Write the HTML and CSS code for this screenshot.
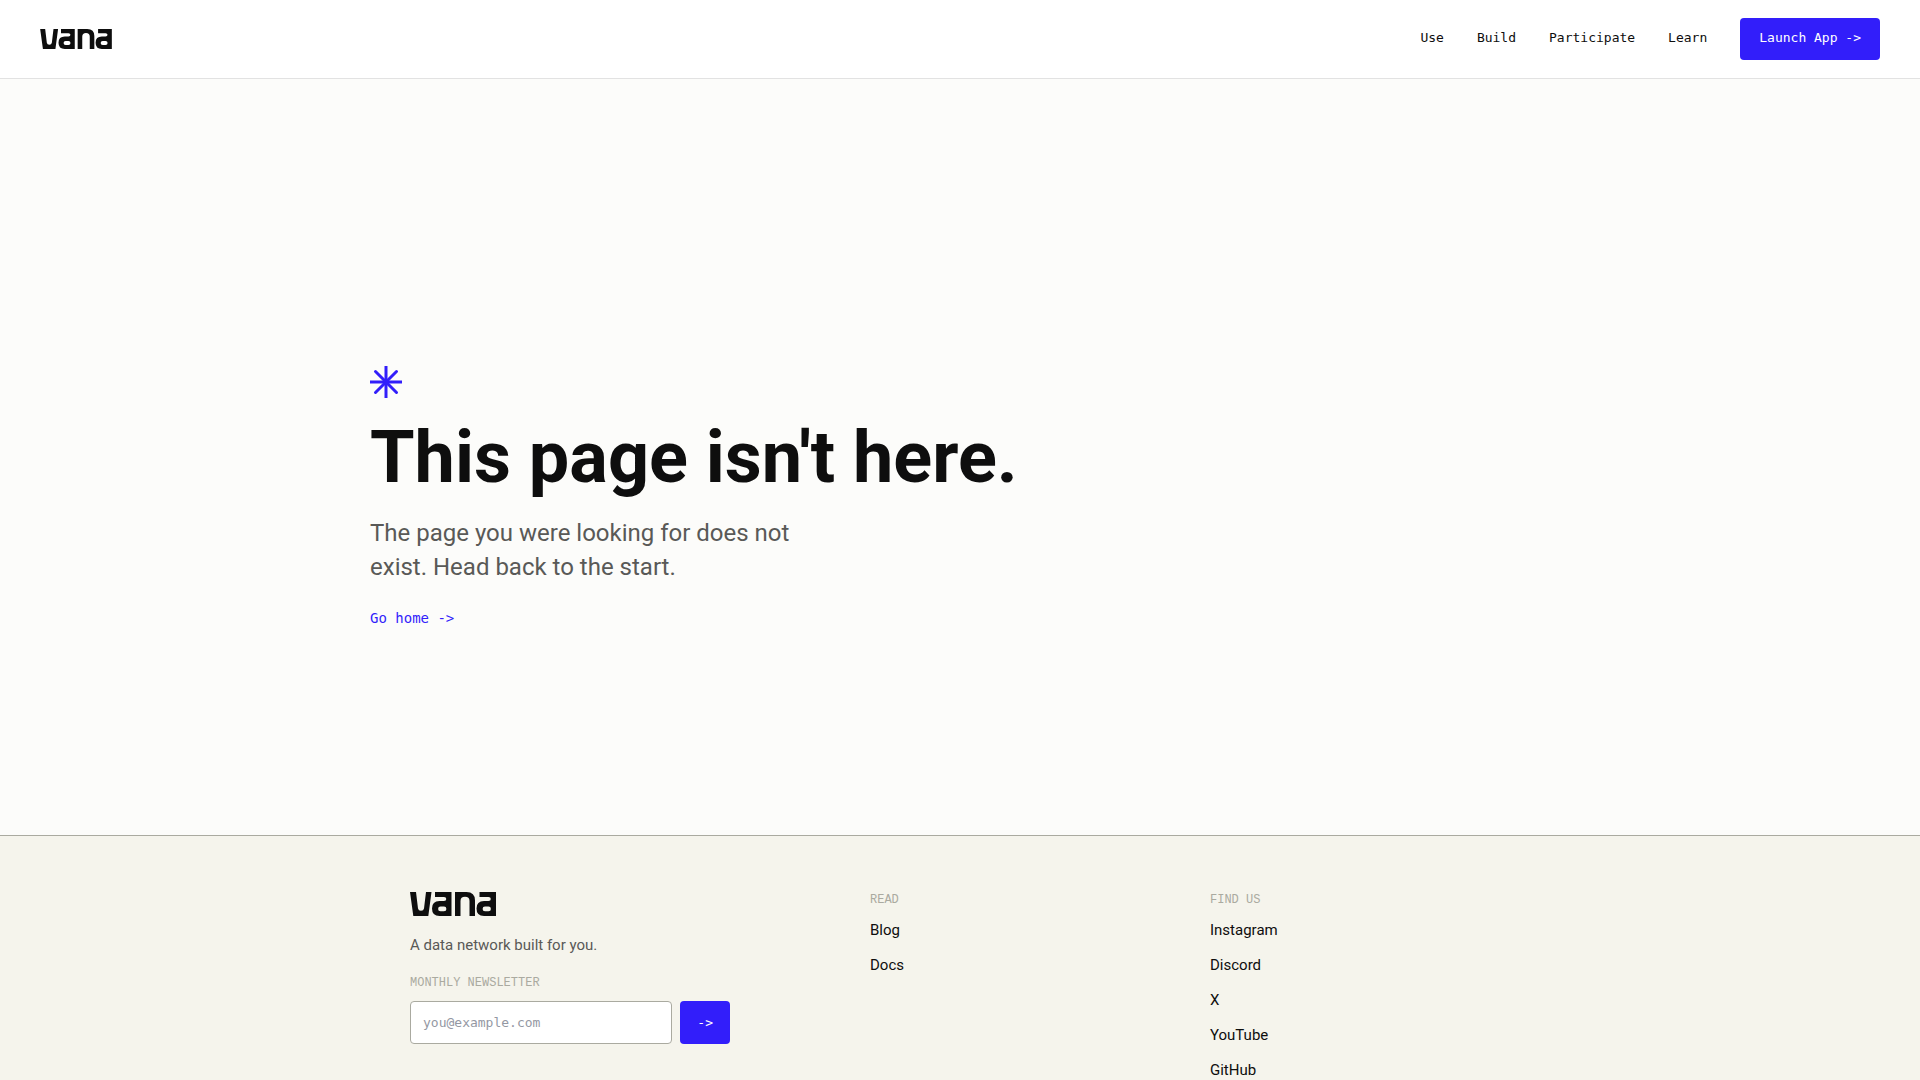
FILE: index.html
```html
<!DOCTYPE html>
<html lang="en">
<head>
  <meta charset="UTF-8">
  <meta name="viewport" content="width=device-width, initial-scale=1">
  <title>Vana</title>
  <link rel="stylesheet" href="styles.css">
</head>
<body>
  <!-- logo shapes, used in header and footer -->
  <svg class="defs" aria-hidden="true">
    <symbol id="logo" viewBox="0 0 86 24">
      <path d="M0 0H6L8 16.5Q8.400 18.800 11 18.800T14 16.500L16 0H21.500L18.300 24H3.300Z"/>
      <path id="bowl" fill-rule="evenodd" d="M25 0H41.500V24H29.500Q22 24 22 16.500T29.500 9H34Q36.300 9 36.300 7T34 5H25ZM30.500 14.500A2.400 2.400 0 0 0 30.500 19.300H34A2.400 2.400 0 0 0 34 14.500Z"/>
      <path d="M45 0H56.500Q65 0 65 8.500V24H59.500V9Q59.500 4.800 55 4.800T50.500 9V24H45Z"/>
      <use href="#bowl" x="44.500"/>
    </symbol>
  </svg>

  <header class="header">
    <a class="logo-link" href="/" aria-label="Vana"><svg class="logo"><use href="#logo"/></svg></a>
    <nav class="nav">
      <a href="/use">Use</a>
      <a href="/build">Build</a>
      <a href="/participate">Participate</a>
      <a href="/learn">Learn</a>
      <button class="btn launch" type="button">Launch App -&gt;</button>
    </nav>
  </header>

  <main class="main">
    <div class="container">
      <svg class="star" viewBox="0 0 32 32" aria-hidden="true">
        <path d="M16 0V32M0 16H32"/>
        <path stroke-linecap="round" d="M5.500 5.500L26.500 26.500M26.500 5.500L5.500 26.500"/>
      </svg>
      <h1>This page isn't here.</h1>
      <p class="lead">The page you were looking for does not exist. Head back to the start.</p>
      <a class="home" href="/">Go home -&gt;</a>
    </div>
  </main>

  <footer class="footer">
    <div class="container footer-grid">
      <div>
        <svg class="logo logo-large" role="img" aria-label="Vana"><use href="#logo"/></svg>
        <p class="tagline">A data network built for you.</p>
        <form class="newsletter">
          <label class="label" for="email">MONTHLY NEWSLETTER</label>
          <div class="field">
            <input type="email" id="email" placeholder="you@example.com">
            <button class="btn" type="submit">-&gt;</button>
          </div>
        </form>
      </div>
      <div>
        <h2 class="label">READ</h2>
        <ul class="links">
          <li><a href="/blog">Blog</a></li>
          <li><a href="/docs">Docs</a></li>
        </ul>
      </div>
      <div>
        <h2 class="label">FIND US</h2>
        <ul class="links">
          <li><a href="#">Instagram</a></li>
          <li><a href="#">Discord</a></li>
          <li><a href="#">X</a></li>
          <li><a href="#">YouTube</a></li>
          <li><a href="#">GitHub</a></li>
        </ul>
      </div>
    </div>
  </footer>
</body>
</html>
```

FILE: styles.css
```css
:root {
  --blue: #321efa;
  --ink: #0e0e0e;
  --grey: #595957;
  --muted: #aaaaa0;
  --sans: Roboto, "Liberation Sans", sans-serif;
  --mono: "DejaVu Sans Mono", "Liberation Mono", monospace;
}
* {
  box-sizing: border-box;
}
body {
  margin: 0;
  background: #fcfcfa;
  color: var(--ink);
  font-family: var(--sans);
}
a {
  color: inherit;
  text-decoration: none;
}
svg {
  display: block;
}
.defs {
  position: absolute;
  width: 0;
  height: 0;
}

/* header */
.header {
  display: flex;
  align-items: center;
  justify-content: space-between;
  padding: 18px 40px;
  background: #fff;
  border-bottom: 1px solid #e2e2e2;
}
.logo {
  width: 72px;
  height: 20px;
  fill: var(--ink);
}
.logo-large {
  width: 86px;
  height: 24px;
}
.nav {
  display: flex;
  align-items: center;
  gap: 33px;
  font-family: var(--mono);
  font-size: 13px;
}
.nav a {
  padding-bottom: 3px;
}
.btn {
  height: 42px;
  padding: 0 17px;
  border: none;
  border-radius: 4px;
  background: var(--blue);
  color: #fff;
  font-family: var(--mono);
  font-size: 13px;
  cursor: pointer;
}
.launch {
  padding: 0 19px 3px;
}

/* 404 message */
.container {
  width: 100%;
  max-width: 1180px;
  margin: 0 auto;
}
.main {
  display: flex;
  align-items: center;
  min-height: 70vh;
  padding-top: 78px;
}
.star {
  width: 32px;
  height: 32px;
  fill: none;
  stroke: var(--blue);
  stroke-width: 3;
}
h1 {
  margin: 24px 0 22px;
  font-size: 72px;
  font-weight: 700;
  line-height: 72px;
}
.lead {
  max-width: 460px;
  margin: 0 0 24px;
  color: var(--grey);
  font-size: 24px;
  line-height: 34px;
}
.home {
  color: var(--blue);
  font-family: var(--mono);
  font-size: 14px;
}

/* footer */
.footer {
  padding: 56px 0;
  background: #f5f4ec;
  border-top: 1px solid var(--muted);
}
.footer-grid {
  display: grid;
  grid-template-columns: 420fr 300fr 300fr;
  gap: 40px;
  padding: 0 40px;
}
.tagline {
  margin: 17px 0 18px;
  color: var(--grey);
  font-size: 15px;
  line-height: 24px;
}
.label {
  display: block;
  margin: 0 0 10px;
  color: var(--muted);
  font-family: "Liberation Mono", monospace;
  font-size: 12px;
  font-weight: 400;
  line-height: 16px;
}
.field {
  display: flex;
  gap: 8px;
  max-width: 320px;
}
.field input {
  flex: 1;
  min-width: 0;
  height: 43px;
  padding: 0 12px;
  border: 1px solid var(--muted);
  border-radius: 4px;
  background: #fff;
  font-family: var(--mono);
  font-size: 13px;
}
.field input::placeholder {
  color: #9498a3;
}
.field .btn {
  height: 43px;
}
.links {
  display: grid;
  gap: 11px;
  margin: 0;
  padding: 0;
  list-style: none;
  font-size: 15px;
  line-height: 24px;
}
```
